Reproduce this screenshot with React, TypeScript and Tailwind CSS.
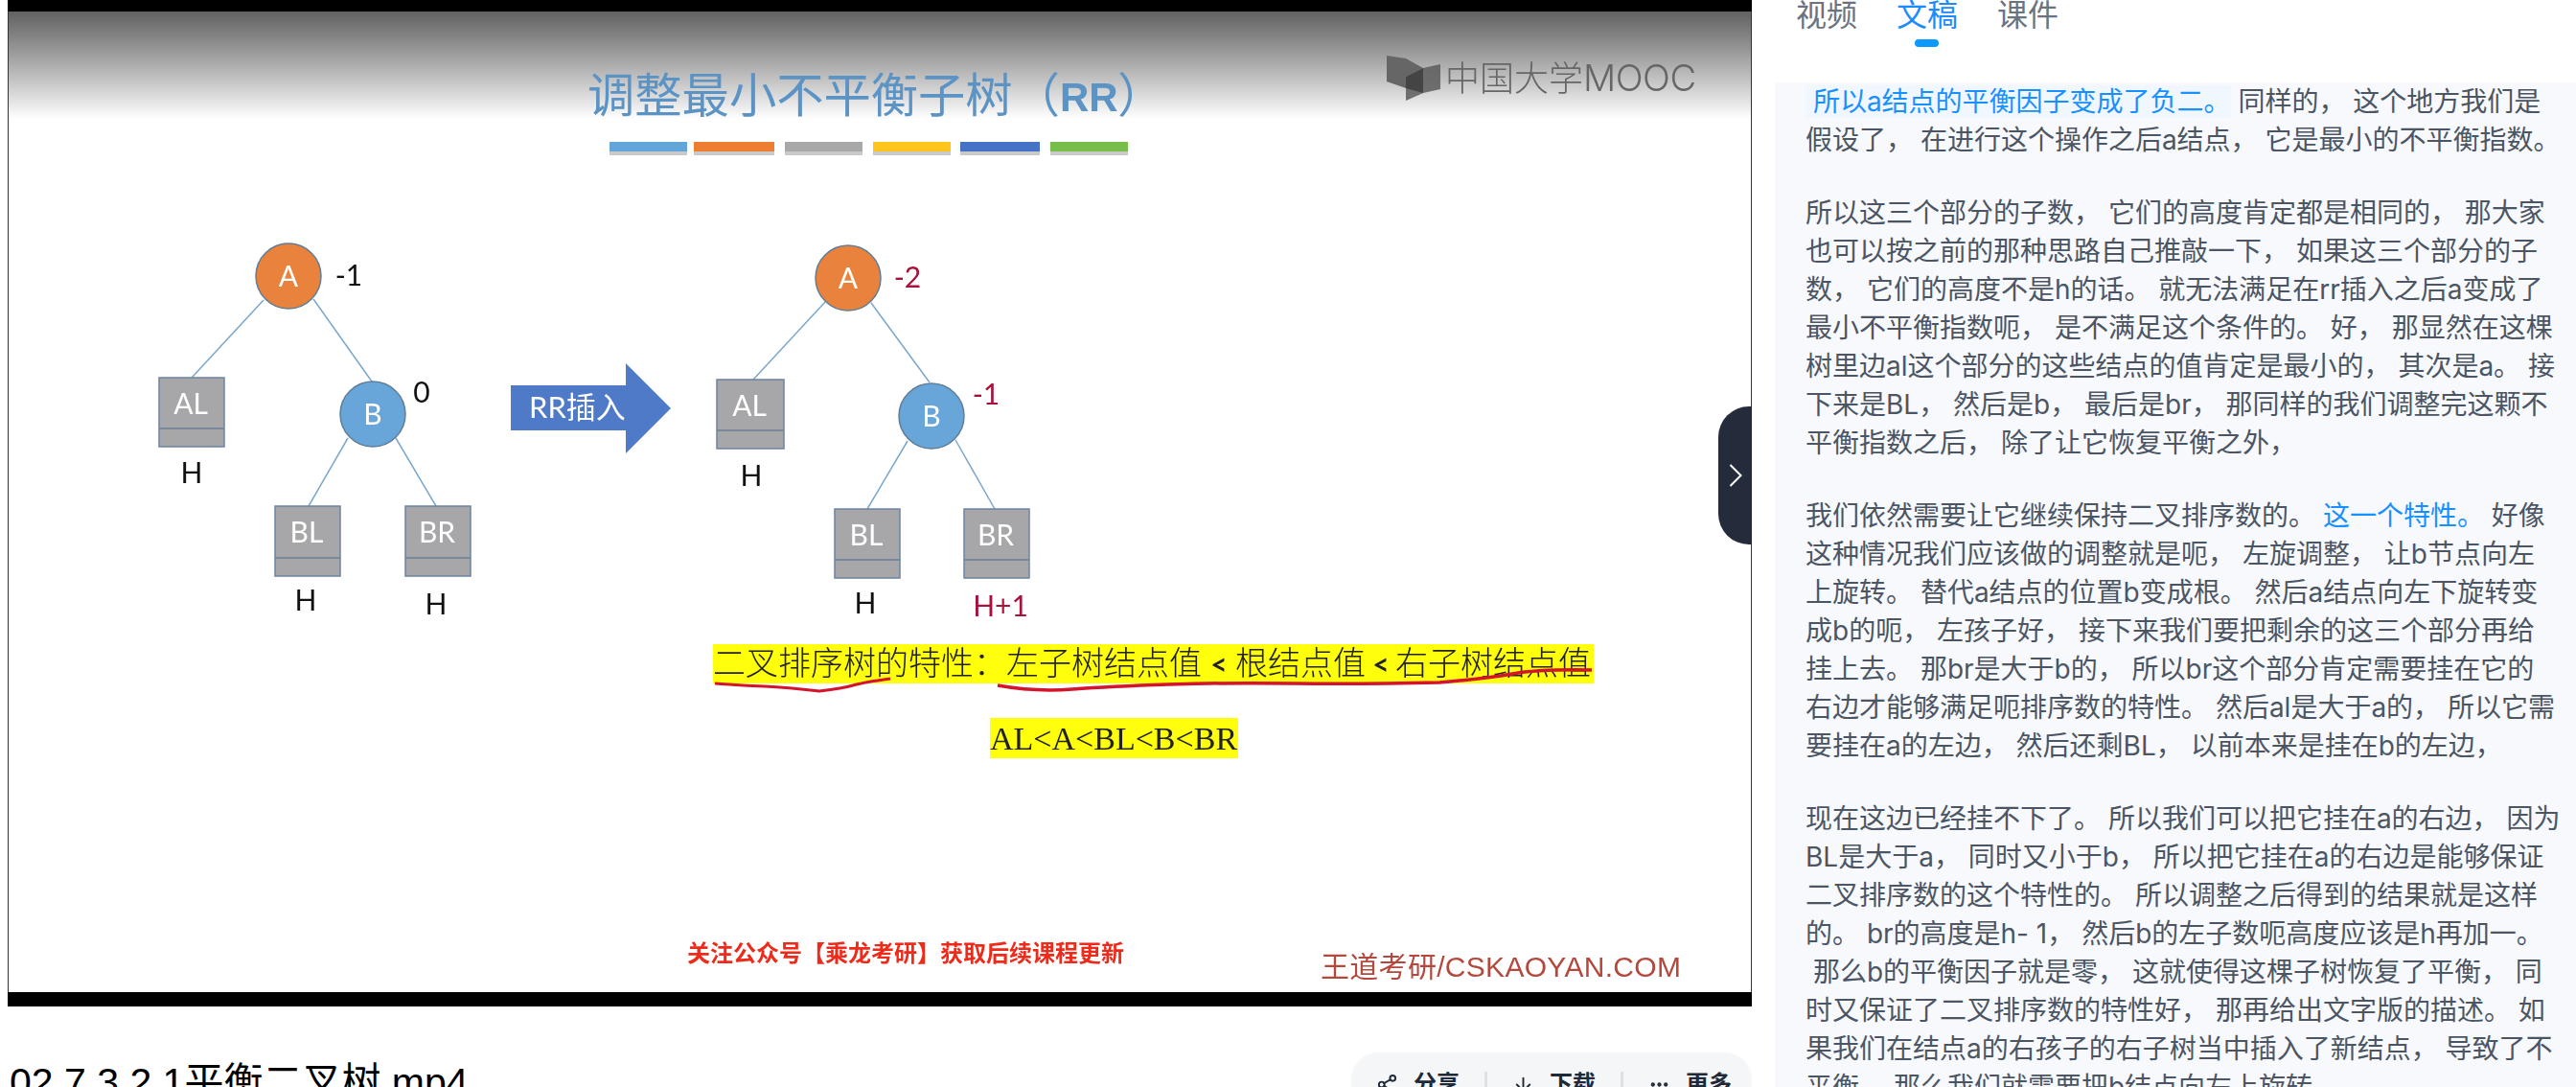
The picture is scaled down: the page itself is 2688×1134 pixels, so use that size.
import { ArrowDown, Ellipsis, Share2 } from "lucide-react";

const cjk = "'Noto Sans CJK SC', sans-serif";
const label = "Lato, 'Noto Sans CJK SC', sans-serif";

const bars = [
  { x: 636, w: 81, color: "#62a5d8" },
  { x: 724, w: 84, color: "#ed7d31" },
  { x: 819, w: 81, color: "#a8a8a8" },
  { x: 911, w: 81, color: "#ffc51a" },
  { x: 1002, w: 83, color: "#4472c4" },
  { x: 1096, w: 81, color: "#76bd4a" },
];

const lines = [
  [275, 313, 200, 394], [327, 312, 388, 398], [363, 457, 322, 528], [413, 457, 455, 528],
  [861, 315, 786, 396], [909, 316, 970, 399], [947, 460, 905, 531], [997, 459, 1038, 531],
];

const boxes = [
  { x: 166, y: 394, name: "AL", w: 68, h: 72 },
  { x: 287, y: 528, name: "BL", w: 68, h: 73 },
  { x: 423, y: 528, name: "BR", w: 68, h: 73 },
  { x: 748, y: 396, name: "AL", w: 70, h: 72 },
  { x: 871, y: 531, name: "BL", w: 68, h: 72 },
  { x: 1006, y: 531, name: "BR", w: 68, h: 72 },
];

const nodes = [
  { x: 301, y: 288, name: "A", fill: "#e9823c" },
  { x: 389, y: 432, name: "B", fill: "#68a5d9" },
  { x: 885, y: 290, name: "A", fill: "#e9823c" },
  { x: 972, y: 434, name: "B", fill: "#68a5d9" },
];

const marks = [
  { x: 364, y: 298, text: "-1", fill: "#111" },
  { x: 440, y: 420, text: "0", fill: "#111" },
  { x: 200, y: 504, text: "H", fill: "#111" },
  { x: 319, y: 637, text: "H", fill: "#111" },
  { x: 455, y: 641, text: "H", fill: "#111" },
  { x: 947, y: 300, text: "-2", fill: "#a8123a" },
  { x: 1029, y: 422, text: "-1", fill: "#a8123a" },
  { x: 784, y: 507, text: "H", fill: "#111" },
  { x: 903, y: 640, text: "H", fill: "#111" },
  { x: 1044, y: 643, text: "H+1", fill: "#a8123a" },
];

const paragraphs = [
  [
    "假设了， 在进行这个操作之后a结点， 它是最小的不平衡指数。",
  ],
  [
    "所以这三个部分的子数， 它们的高度肯定都是相同的， 那大家",
    "也可以按之前的那种思路自己推敲一下， 如果这三个部分的子",
    "数， 它们的高度不是h的话。 就无法满足在rr插入之后a变成了",
    "最小不平衡指数呃， 是不满足这个条件的。 好， 那显然在这棵",
    "树里边al这个部分的这些结点的值肯定是最小的， 其次是a。 接",
    "下来是BL， 然后是b， 最后是br， 那同样的我们调整完这颗不",
    "平衡指数之后， 除了让它恢复平衡之外，",
  ],
];

const paragraphs2 = [
  [
    "这种情况我们应该做的调整就是呃， 左旋调整， 让b节点向左",
    "上旋转。 替代a结点的位置b变成根。 然后a结点向左下旋转变",
    "成b的呃， 左孩子好， 接下来我们要把剩余的这三个部分再给",
    "挂上去。 那br是大于b的， 所以br这个部分肯定需要挂在它的",
    "右边才能够满足呃排序数的特性。 然后al是大于a的， 所以它需",
    "要挂在a的左边， 然后还剩BL， 以前本来是挂在b的左边，",
  ],
  [
    "现在这边已经挂不下了。 所以我们可以把它挂在a的右边， 因为",
    "BL是大于a， 同时又小于b， 所以把它挂在a的右边是能够保证",
    "二叉排序数的这个特性的。 所以调整之后得到的结果就是这样",
    "的。 br的高度是h- 1， 然后b的左子数呃高度应该是h再加一。",
    " 那么b的平衡因子就是零， 这就使得这棵子树恢复了平衡， 同",
    "时又保证了二叉排序数的特性好， 那再给出文字版的描述。 如",
    "果我们在结点a的右孩子的右子树当中插入了新结点， 导致了不",
    "平衡， 那么我们就需要把b结点向左上旋转。",
  ],
];

function Slide() {
  return (
    <svg className="absolute inset-0 blur-[0.4px]" width="1818" height="1023" viewBox="9 12 1818 1023">
      <text x="613" y="117" fontFamily={cjk} fontSize="49.3" fill="#5b93c4">调整最小不平衡子树（</text>
      <text x="1106" y="116" fontFamily="'Liberation Sans', sans-serif" fontWeight="700" fontSize="42" fill="#5b93c4">RR</text>
      <text x="1166" y="117" fontFamily={cjk} fontSize="49.3" fill="#5b93c4">）</text>

      {bars.map((b) => (
        <g key={b.x}>
          <rect x={b.x} y="157" width={b.w} height="5" fill="#c9c9c9" />
          <rect x={b.x} y="148" width={b.w} height="10" fill={b.color} />
        </g>
      ))}

      {/* mooc logo */}
      <path d="M1447 58 L1467 61 L1485 71 L1467 80 L1467 92 L1447 85 Z" fill="#666" />
      <path d="M1503 67 L1503 93 L1485 97 L1467 105 L1467 80 L1485 71 Z" fill="#5c5c5c" fillOpacity="0.85" />
      <path d="M1467 80 L1485 71 L1485 97 L1467 92 Z" fill="#444" />
      <text x="1508" y="95" fontFamily={cjk} fontWeight="300" fontSize="36" fill="#666">中国大学</text>
      <text x="1652" y="95" fontFamily="Inter, sans-serif" fontWeight="300" fontSize="38" letterSpacing="-0.5" fill="#666">MOOC</text>

      {lines.map((l) => (
        <line key={l[0]} x1={l[0]} y1={l[1]} x2={l[2]} y2={l[3]} stroke="#7ba7cc" strokeWidth="1.5" />
      ))}
      {boxes.map((b) => (
        <g key={b.x}>
          <rect x={b.x} y={b.y} width={b.w} height={b.h} fill="#a7a7a9" stroke="#6b84a0" strokeWidth="1.5" />
          <line x1={b.x} y1={b.y + b.h - 19} x2={b.x + b.w} y2={b.y + b.h - 19} stroke="#6b7f96" strokeWidth="1.5" />
          <text x={b.x + b.w / 2 - 1} y={b.y + 38} textAnchor="middle" fontFamily={label} fontSize="30" fill="#fff">{b.name}</text>
        </g>
      ))}
      {nodes.map((n) => (
        <g key={n.x}>
          <circle cx={n.x} cy={n.y} r="34" fill={n.fill} stroke="#5f7d96" strokeWidth="1.5" />
          <text x={n.x} y={n.y + 11} textAnchor="middle" fontFamily={label} fontSize="30" fill="#fff">{n.name}</text>
        </g>
      ))}
      {marks.map((m) => (
        <text key={m.x} x={m.x} y={m.y} textAnchor="middle" fontFamily={label} fontSize="30" fill={m.fill}>{m.text}</text>
      ))}

      <path d="M533 402 H653 V379 L700 426 L653 473 V449 H533 Z" fill="#4f7ac7" />
      <text x="552" y="436" fontFamily={label} fontSize="31" fill="#fff">RR插入</text>

      <rect x="744" y="672" width="919" height="41" fill="#ffff0c" />
      <g fontFamily={cjk} fontWeight="300" fontSize="34" fill="#222">
        <text x="744" y="704">二叉排序树的特性：左子树结点值</text>
        <text x="1289" y="704">根结点值</text>
        <text x="1456" y="704">右子树结点值</text>
      </g>
      <text x="1272" y="704" textAnchor="middle" fontFamily={label} fontWeight="700" fontSize="30" fill="#222">&lt;</text>
      <text x="1441" y="704" textAnchor="middle" fontFamily={label} fontWeight="700" fontSize="30" fill="#222">&lt;</text>
      <path d="M746 713 Q775 715 798 716 T855 721 Q880 718 890 715 T929 708" fill="none" stroke="#d3142c" strokeWidth="3" />
      <path d="M1041 715 Q1080 722 1119 719 T1219 714 T1349 713 T1502 712 Q1550 708 1578 703 T1661 699" fill="none" stroke="#d3142c" strokeWidth="3.5" />

      <rect x="1033" y="749" width="259" height="42" fill="#ffff0c" />
      <text x="1033" y="782" fontFamily="'Liberation Serif', serif" fontSize="34" fill="#222">AL&lt;A&lt;BL&lt;B&lt;BR</text>

      <text x="717" y="1003" fontFamily={cjk} fontWeight="700" fontSize="24" fill="#ee2a1b">关注公众号【乘龙考研】获取后续课程更新</text>
      <text x="1378" y="1019" fontFamily="'Liberation Sans', 'Noto Sans CJK SC', sans-serif" fontSize="30" letterSpacing="0.3" fill="#b4483c">王道考研/CSKAOYAN.COM</text>
    </svg>
  );
}

function TextLines({ items }: { items: string[] }) {
  return (
    <div className="mb-9">
      {items.map((line) => (
        <div key={line} className="whitespace-pre">
          {line}
        </div>
      ))}
    </div>
  );
}

export default function App() {
  return (
    <div className="flex h-[1134px] w-[2688px] overflow-hidden bg-white font-['Inter','Noto_Sans_CJK_SC',sans-serif]">
      <div className="ml-2 w-[1820px] shrink-0">
        <div className="relative flex h-[1050px] flex-col bg-black">
          <div className="h-3" />
          <div className="relative h-[1023px] border-x border-[#333] bg-white">
            <div className="h-[112px] bg-gradient-to-b from-[#626262] to-white" />
            <Slide />
          </div>
          <div className="absolute right-0 top-[424px] flex h-[144px] w-[35px] items-center justify-center rounded-l-[32px] bg-[#242c3b]">
            <svg width="14" height="24" viewBox="0 0 14 24" fill="none">
              <path d="M1.5 1 L12.5 12 L1.5 23" stroke="#fff" strokeWidth="2" />
            </svg>
          </div>
        </div>

        <div className="flex items-start justify-between">
          <div className="mt-[51px] ml-[2px] font-['Liberation_Sans','Noto_Sans_CJK_SC',sans-serif] text-[41px] leading-[56px] text-black">
            02.7.3.2.1平衡二叉树.mp4
          </div>
          <div className="mt-12 flex h-[80px] w-[418px] items-start gap-[26px] rounded-t-[28px] bg-[#f5f6f8] pl-[26px] pt-[17px] text-2xl leading-8 font-semibold text-[#1f2937]">
            <div className="flex items-center gap-4">
              <Share2 size={23} strokeWidth={2} />
              <span>分享</span>
            </div>
            <div className="mt-[3px] h-10 w-[3px] bg-[#dde0e6]" />
            <div className="flex items-center gap-4">
              <ArrowDown size={23} strokeWidth={2} />
              <span>下载</span>
            </div>
            <div className="mt-[3px] h-10 w-[3px] bg-[#dde0e6]" />
            <div className="flex items-center gap-4">
              <Ellipsis size={23} strokeWidth={2.5} />
              <span>更多</span>
            </div>
          </div>
        </div>
      </div>

      <div className="ml-6 flex-1">
        <div className="-mt-[10px] ml-[22px] flex h-[96px] gap-[41px] text-[32px] leading-[52px] text-[#6b7280]">
          <div>视频</div>
          <div className="relative text-[#1a8cff]">
            文稿
            <div className="absolute left-[19px] top-[51px] h-2 w-[25px] rounded-full bg-[#0a99ff]" />
          </div>
          <div>课件</div>
        </div>
        <div className="h-[1100px] bg-[#f7f9fd] pl-8 text-[28px] leading-10 text-[#4b5563]">
          <div className="whitespace-pre">
            <span className="bg-[#f0f7fe] text-[#1890ff]"> 所以a结点的平衡因子变成了负二。</span>
            {" 同样的， 这个地方我们是"}
          </div>
          <TextLines items={paragraphs[0]} />
          <TextLines items={paragraphs[1]} />
          <div className="whitespace-pre">
            我们依然需要让它继续保持二叉排序数的。<span className="text-[#1890ff]"> 这一个特性。</span>
            {" 好像"}
          </div>
          <TextLines items={paragraphs2[0]} />
          <TextLines items={paragraphs2[1]} />
        </div>
      </div>
    </div>
  );
}
